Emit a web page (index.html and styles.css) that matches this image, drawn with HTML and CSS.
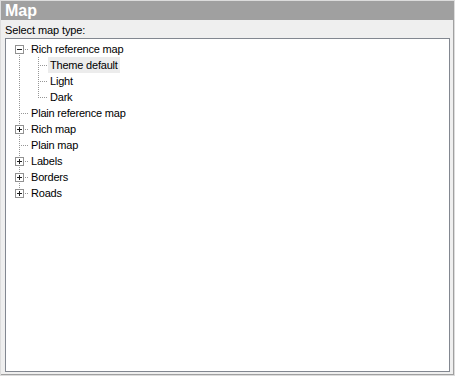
FILE: index.html
```html
<!DOCTYPE html>
<html>

<head>
  <meta charset="UTF-8">
  <title>Map</title>
  <link rel="stylesheet" href="styles.css">
</head>

<body>
  <div class="panel">
    <div class="panel__header">Map</div>
    <div class="panel__body">
      <p class="panel__label">Select map type:</p>
      <div class="tree">
        <!-- Rich reference map -->
        <div class="tree__row">
          <span class="tree__cell tree__cell--first">
            <svg class="tree__toggle" width="9" height="9" viewBox="0 0 9 9">
              <rect x="0.5" y="0.5" width="8" height="8" fill="#fff" stroke="#919191" />
              <path d="M2 4.5h5" stroke="#1e1e1e" />
            </svg>
          </span>
          <span class="tree__text">Rich reference map</span>
        </div>
        <div class="tree__row">
          <span class="tree__cell tree__cell--pass"></span>
          <span class="tree__cell tree__cell--tee"></span>
          <span class="tree__text tree__text--selected">Theme default</span>
        </div>
        <div class="tree__row">
          <span class="tree__cell tree__cell--pass"></span>
          <span class="tree__cell tree__cell--tee"></span>
          <span class="tree__text">Light</span>
        </div>
        <div class="tree__row">
          <span class="tree__cell tree__cell--pass"></span>
          <span class="tree__cell tree__cell--last"></span>
          <span class="tree__text">Dark</span>
        </div>

        <!-- Остальные корневые элементы -->
        <div class="tree__row">
          <span class="tree__cell tree__cell--tee"></span>
          <span class="tree__text">Plain reference map</span>
        </div>
        <div class="tree__row">
          <span class="tree__cell tree__cell--tee">
            <svg class="tree__toggle" width="9" height="9" viewBox="0 0 9 9">
              <rect x="0.5" y="0.5" width="8" height="8" fill="#fff" stroke="#919191" />
              <path d="M2 4.5h5M4.5 2v5" stroke="#1e1e1e" />
            </svg>
          </span>
          <span class="tree__text">Rich map</span>
        </div>
        <div class="tree__row">
          <span class="tree__cell tree__cell--tee"></span>
          <span class="tree__text">Plain map</span>
        </div>
        <div class="tree__row">
          <span class="tree__cell tree__cell--tee">
            <svg class="tree__toggle" width="9" height="9" viewBox="0 0 9 9">
              <rect x="0.5" y="0.5" width="8" height="8" fill="#fff" stroke="#919191" />
              <path d="M2 4.5h5M4.5 2v5" stroke="#1e1e1e" />
            </svg>
          </span>
          <span class="tree__text">Labels</span>
        </div>
        <div class="tree__row">
          <span class="tree__cell tree__cell--tee">
            <svg class="tree__toggle" width="9" height="9" viewBox="0 0 9 9">
              <rect x="0.5" y="0.5" width="8" height="8" fill="#fff" stroke="#919191" />
              <path d="M2 4.5h5M4.5 2v5" stroke="#1e1e1e" />
            </svg>
          </span>
          <span class="tree__text">Borders</span>
        </div>
        <div class="tree__row">
          <span class="tree__cell tree__cell--last">
            <svg class="tree__toggle" width="9" height="9" viewBox="0 0 9 9">
              <rect x="0.5" y="0.5" width="8" height="8" fill="#fff" stroke="#919191" />
              <path d="M2 4.5h5M4.5 2v5" stroke="#1e1e1e" />
            </svg>
          </span>
          <span class="tree__text">Roads</span>
        </div>
      </div>
    </div>
  </div>
</body>

</html>
```

FILE: styles.css
```css
body {
  margin: 0;
  font-family: "Liberation Sans", Arial, sans-serif;
  font-size: 11px;
  color: rgb(0, 0, 0);
}

.panel {
  width: 455px;
  height: 376px;
  box-sizing: border-box;
  border: 1px solid rgb(220, 220, 220);
  display: flex;
  flex-direction: column;
}

.panel__header {
  height: 19px;
  padding-left: 4px;
  background-color: rgb(160, 160, 160);
  color: rgb(255, 255, 255);
  font-size: 16px;
  font-weight: 700;
  line-height: 20px;
}

.panel__body {
  flex: 1;
  display: flex;
  flex-direction: column;
  background-color: rgb(239, 239, 239);
  border-right: 1px solid rgb(160, 160, 160);
  border-bottom: 1px solid rgb(160, 160, 160);
}

.panel__label {
  margin: 2px 0 0 4px;
  line-height: 16px;
  letter-spacing: -0.1px;
}

.tree {
  flex: 1;
  margin: 0 3px 2px 4px;
  padding: 2px 0 0 4px;
  background-color: white;
  border: 1px solid rgb(130, 135, 144);
}

.tree__row {
  display: flex;
  align-items: center;
  height: 16px;
}

/* Ячейка с пунктирными линиями дерева */
.tree__cell {
  width: 19px;
  height: 16px;
  flex-shrink: 0;
  display: flex;
  align-items: center;
  background-repeat: no-repeat;
}

.tree__toggle {
  margin-left: 5px;
}

/* ├ */
.tree__cell--tee {
  background-image:
    repeating-linear-gradient(to bottom, rgb(150, 150, 150) 0 1px, transparent 1px 2px),
    repeating-linear-gradient(to right, rgb(150, 150, 150) 0 1px, transparent 1px 2px);
  background-position: 9px 0, 11px 8px;
  background-size: 1px 16px, 8px 1px;
}

/* └ */
.tree__cell--last {
  background-image:
    repeating-linear-gradient(to bottom, rgb(150, 150, 150) 0 1px, transparent 1px 2px),
    repeating-linear-gradient(to right, rgb(150, 150, 150) 0 1px, transparent 1px 2px);
  background-position: 9px 0, 11px 8px;
  background-size: 1px 9px, 8px 1px;
}

/* ┌ первый корень */
.tree__cell--first {
  background-image:
    repeating-linear-gradient(to bottom, rgb(150, 150, 150) 0 1px, transparent 1px 2px),
    repeating-linear-gradient(to right, rgb(150, 150, 150) 0 1px, transparent 1px 2px);
  background-position: 9px 8px, 11px 8px;
  background-size: 1px 8px, 8px 1px;
}

/* │ */
.tree__cell--pass {
  background-image: repeating-linear-gradient(to bottom, rgb(150, 150, 150) 0 1px, transparent 1px 2px);
  background-position: 9px 0;
  background-size: 1px 16px;
}

.tree__text {
  padding: 0 2px;
  line-height: 16px;
  letter-spacing: -0.2px;
  white-space: nowrap;
}

.tree__text--selected {
  background-color: rgb(236, 236, 236);
}
```
